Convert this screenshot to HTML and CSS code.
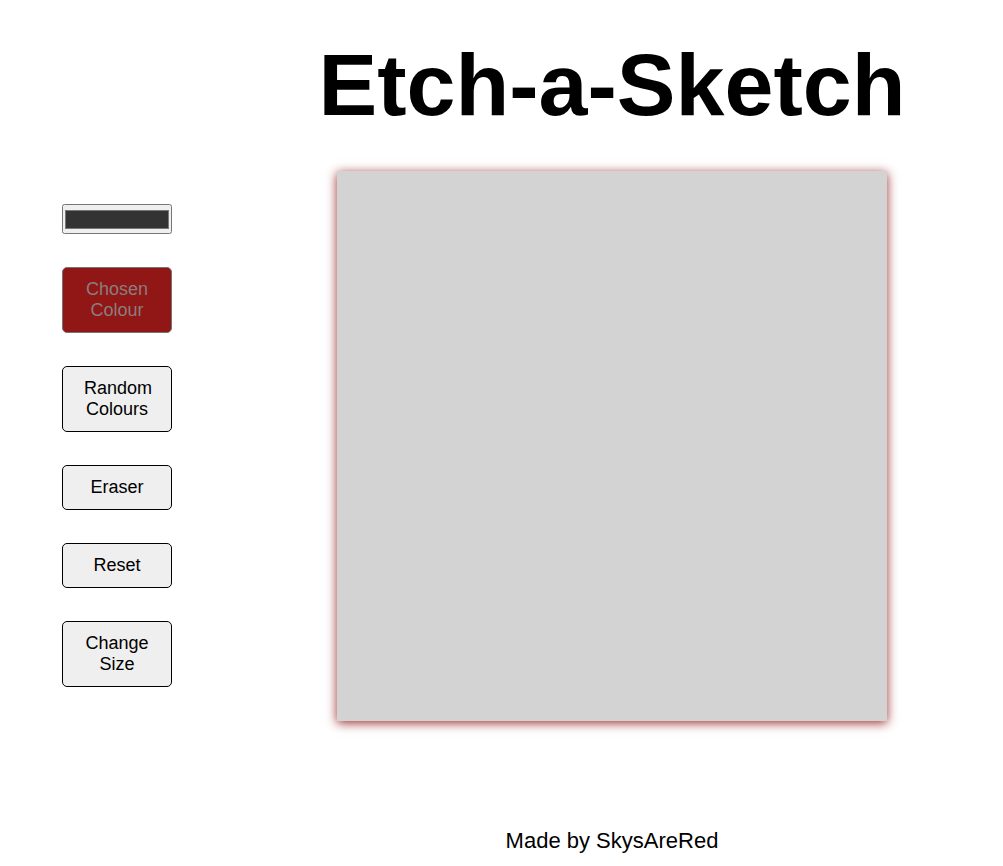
FILE: index.html
```html
<!DOCTYPE html>
<html lang="en">
<head>
  <meta charset="utf-8">
  <title>Etch-a-Sketch</title>
  <link rel="stylesheet" href="styles.css">
</head>
<body>
  <div class="layout">
    <aside class="controls">
      <input class="color-picker" type="color" value="#333333" aria-label="Pen colour">
      <button class="mode-button chosen" type="button" disabled>Chosen Colour</button>
      <button class="mode-button" type="button">Random Colours</button>
      <button class="mode-button" type="button">Eraser</button>
      <button class="mode-button" type="button">Reset</button>
      <button class="mode-button" type="button">Change Size</button>
    </aside>
    <main class="main">
      <h1 class="title">Etch-a-Sketch</h1>
      <div class="board"></div>
      <footer class="credit">Made by SkysAreRed</footer>
    </main>
  </div>
</body>
</html>
```

FILE: styles.css
```css
* {
  box-sizing: border-box;
}

body {
  margin: 0;
  background: #fff;
  color: #000;
  font-family: "Liberation Sans", Arial, sans-serif;
}

.layout {
  display: grid;
  grid-template-columns: 110px minmax(0, 1fr);
  column-gap: 111px;
  min-height: 100vh;
  padding: 0 62px;
}

.controls {
  display: flex;
  flex-direction: column;
  justify-content: center;
  gap: 33px;
  padding-top: 25px;
}

.color-picker {
  width: 100%;
  height: 30px;
  padding: 1px 0 0;
}

.mode-button {
  width: 100%;
  padding: 11px 21px;
  border: 1px solid #000;
  border-radius: 5px;
  background: #efefef;
  color: #000;
  font-family: inherit;
  font-size: 18px;
  line-height: 21px;
}

.chosen:disabled {
  border-color: #757575;
  background: #911616;
  color: #8a7e7e;
}

.main {
  display: flex;
  flex-direction: column;
  align-items: center;
  padding: 34px 0 12px;
}

.title {
  margin: 0 0 36px;
  font-size: 88px;
  line-height: 101px;
}

.board {
  width: 550px;
  max-width: 100%;
  aspect-ratio: 1;
  background: #d3d3d3;
  box-shadow: 0 2px 10px rgba(145, 22, 22, 0.9);
}

.credit {
  margin-top: auto;
  font-size: 22px;
  line-height: 26px;
}
```
